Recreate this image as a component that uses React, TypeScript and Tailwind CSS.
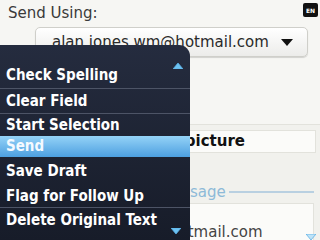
import React from 'react';

const sans = { fontFamily: '"DejaVu Sans", "Liberation Sans", sans-serif' };
const cond = { fontFamily: '"DejaVu Sans Condensed", "DejaVu Sans", sans-serif', fontStretch: 'condensed' as const };

type Item = { label: string; h: string; sep?: boolean; active?: boolean };

const items: Item[] = [
    { label: 'Check Spelling', h: 'h-[25px]', sep: true },
    { label: 'Clear Field', h: 'h-[24px]', sep: true },
    { label: 'Start Selection', h: 'h-[22px]' },
    { label: 'Send', h: 'h-[21px]', active: true },
    { label: 'Save Draft', h: 'h-[28px]' },
    { label: 'Flag for Follow Up', h: 'h-[22px]', sep: true },
    { label: 'Delete Original Text', h: 'h-[25px]' },
];

function Tri({ up, filled = true }: { up?: boolean; filled?: boolean }) {
    return (
        <svg width="10" height="6" viewBox="0 0 10 6">
            <polygon
                points={up ? '0,6 5,0 10,6' : '0,0 10,0 5,6'}
                fill={filled ? '#6cc2f2' : '#bfe3f7'}
                stroke="#5aaee6"
                strokeWidth="0.8"
            />
        </svg>
    );
}

function Menu() {
    return (
        <div
            className="absolute left-0 top-[45px] w-[190px] h-[195px] rounded-tr-[11px] bg-gradient-to-b from-[#252c3f] to-[#171c29] pt-[18px] overflow-hidden"
            style={cond}
        >
            <div className="absolute right-[7px] top-[18px]">
                <Tri up />
            </div>
            {items.map((it) => (
                <div key={it.label}>
                    <div
                        className={`${it.h} flex items-center pl-[6px] text-[15px] font-bold ${
                            it.active
                                ? 'bg-gradient-to-b from-[#94d3f7] to-[#4c9fe0] text-[#f4faff]'
                                : 'text-white'
                        }`}
                    >
                        {it.label}
                    </div>
                    {it.sep && <div className="h-px bg-[#4d5466]" />}
                </div>
            ))}
            <div className="absolute right-[9px] bottom-[6px]">
                <Tri />
            </div>
        </div>
    );
}

export default function App() {
    return (
        <div className="relative w-[320px] h-[240px] overflow-hidden bg-[#f1f1ed] text-[#333]" style={sans}>
            {/* header */}
            <div className="h-[125px] bg-[#f6f6f3] border-b border-[#e2e2dc] pt-[3px]">
                <div className="flex justify-between pl-[8px] pr-[2px]">
                    <span className="text-[15px] leading-[20px] text-[#3a3a3a]">Send Using:</span>
                    <span className="w-[15px] h-[14px] rounded-[2px] bg-[#111] text-white text-[6px] font-bold flex items-center justify-center">
                        EN
                    </span>
                </div>
                <div className="ml-[35px] mt-[4px] w-[273px] h-[30px] rounded-[5px] border border-[#cfcfca] bg-gradient-to-b from-[#ffffff] to-[#ececea] shadow-[0_1px_1px_rgba(0,0,0,0.15)] flex items-center pl-[16px] pr-[14px] justify-between">
                    <span className="text-[15px] text-[#2a2a2a]">alan.jones.wm@hotmail.com</span>
                    <svg width="12" height="7" viewBox="0 0 12 7">
                        <polygon points="0,0 12,0 6,7" fill="#111" />
                    </svg>
                </div>
            </div>

            {/* attach row */}
            <div className="mt-[5px] mr-[4px] h-[23px] bg-[#fbfbf9] border border-[#e2e2dc] flex items-center justify-end pr-[70px]">
                <span className="text-[15px] font-bold text-[#111]">Add a picture</span>
            </div>

            {/* message */}
            <div className="mr-[6px] pt-[29px]">
                <div className="flex items-center h-[20px]">
                    <span className="pl-[160px] text-[15px] leading-[20px] text-[#8dbad8]">Message</span>
                    <div className="flex-1 ml-[3px] h-[2px] bg-[#b9d0e1]" />
                </div>
                <div className="mt-px ml-[120px] h-[45px] bg-[#fbfbf9] border border-[#e2e2dc] relative">
                    <span className="absolute left-[1px] top-[21px] text-[15px] leading-[15px] text-[#444]">
                        alan@hotmail.com
                    </span>
                    <div className="absolute right-[-3px] top-[30px]">
                        <Tri filled={false} />
                    </div>
                </div>
            </div>

            <Menu />
        </div>
    );
}
